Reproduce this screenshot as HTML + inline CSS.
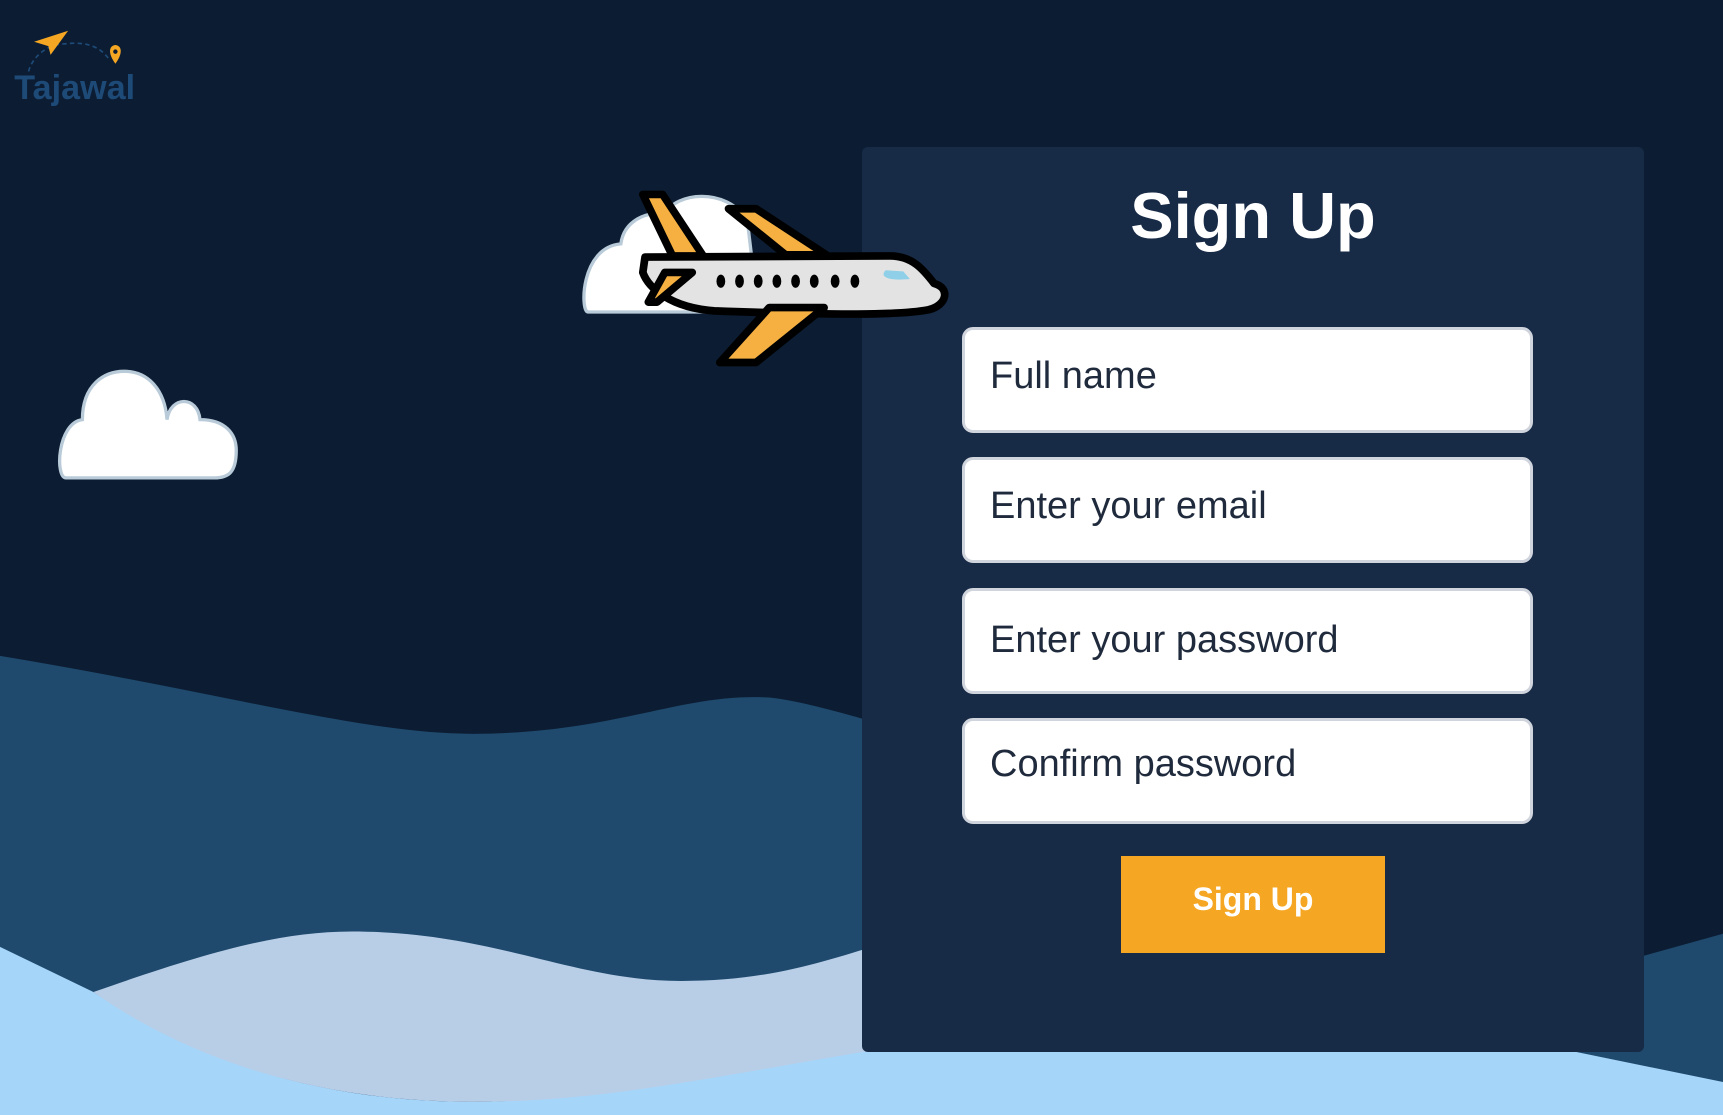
<!DOCTYPE html>
<html><head><meta charset="utf-8"><style>
*{margin:0;padding:0;box-sizing:border-box}
body{width:1723px;height:1115px;overflow:hidden;background:#0c1d33;position:relative;font-family:"Liberation Sans",sans-serif}
svg.bg{position:absolute;left:0;top:0;width:1723px;height:1115px}
.card{position:absolute;left:862px;top:147px;width:782px;height:905px;background:#172a46;border-radius:6px}
.card h1{position:absolute;left:0;right:0;top:31px;text-align:center;color:#fff;font-size:65px;font-weight:bold}
.in{position:absolute;left:100px;width:571px;height:106px;background:#fff;border:3px solid #d0d4dc;border-radius:11px;color:#1f2a3c;font-size:38px;padding-left:25px;line-height:92px}
.btn{position:absolute;left:259px;top:709px;width:264px;height:97px;background:#f5a623;color:#fff;font-weight:bold;font-size:32px;text-align:center;line-height:86px}
</style></head><body>
<svg class="bg" viewBox="0 0 1568 1015" preserveAspectRatio="none">
<path d="M0,597 C200,630 330,668 430,668 C560,668 620,630 700,635 C760,640 1000,720 1200,800 L1496,870 L1568,850 L1568,1015 L0,1015 Z" fill="#1f4a6e"/>
<path d="M0,862 L85,903 C200,980 320,1003 430,1003 C600,1003 800,930 900,900 L1300,930 L1568,985 V1015 H0 Z" fill="#a6d5fa"/>
<path d="M85,903 C180,870 250,848 320,848 C450,848 520,893 620,893 C700,893 750,875 800,860 L800,955 C650,980 550,1003 430,1003 C300,1003 180,970 85,903 Z" fill="#b8cde6"/>
<g fill="#fff" stroke="#b9cbd9" stroke-width="3">
<path d="M60,435 C50,435 52,385 75,382 C75,350 95,338 113,338 C135,338 150,355 152,382 C155,360 180,360 182,382 C205,382 215,395 215,410 C215,430 208,435 195,435 Z"/>
<path d="M535,284 C528,284 528,225 565,222 C568,200 590,192 605,195 C615,175 660,170 680,200 L690,284 Z"/>
</g>
<path d="M26,65 C30,50 45,40 58,40 C75,38 90,40 100,55" fill="none" stroke="#1e4a78" stroke-width="1.5" stroke-dasharray="4 3"/>
<path d="M31,38 L62,28 L46,50 L44,42 Z" fill="#f5a623"/>
<path d="M105,58 C99,50 98,42 105,41 C112,42 111,50 105,58 Z" fill="#f5a623"/><circle cx="105" cy="47" r="2" fill="#0c1d33"/>
<text x="13" y="90" font-family="Liberation Sans,sans-serif" font-weight="bold" font-size="31" fill="#1e4a78" textLength="110">Tajawal</text>
</svg>
<div class="card">
<h1>Sign Up</h1>
<div class="in" style="top:180px">Full name</div>
<div class="in" style="top:310px">Enter your email</div>
<div class="in" style="top:441px;line-height:98px">Enter your password</div>
<div class="in" style="top:571px;line-height:86px">Confirm password</div>
<div class="btn">Sign Up</div>
</div>
<svg class="bg" viewBox="0 0 1568 1015" preserveAspectRatio="none">
<g stroke="#000" stroke-width="7" stroke-linejoin="round">
<path d="M585,177 L603,177 L640,233 L612,233 Z" fill="#f5b041"/>
<path d="M663,190 L688,190 L752,232 L715,232 Z" fill="#f5b041"/>
<path d="M587,234 L810,233 C830,233 840,245 850,258 C865,262 862,278 845,282 C820,287 760,287 650,283 C610,280 590,262 585,248 Z" fill="#e3e3e3"/>
<path d="M590,275 L605,248 L630,248 L598,275 Z" fill="#f5b041"/>
<path d="M700,280 L750,280 L688,330 L655,330 Z" fill="#f5b041"/>
</g>
<path d="M806,246 C800,252 808,256 828,254 L822,247 Z" fill="#8fd0e8"/>
<g fill="#000"><ellipse cx="656" cy="256" rx="4" ry="6"/><ellipse cx="673" cy="256" rx="4" ry="6"/><ellipse cx="690" cy="256" rx="4" ry="6"/><ellipse cx="707" cy="256" rx="4" ry="6"/><ellipse cx="724" cy="256" rx="4" ry="6"/><ellipse cx="741" cy="256" rx="4" ry="6"/><ellipse cx="760" cy="256" rx="4" ry="6"/><ellipse cx="778" cy="256" rx="4" ry="6"/></g>
</svg>
</body></html>
